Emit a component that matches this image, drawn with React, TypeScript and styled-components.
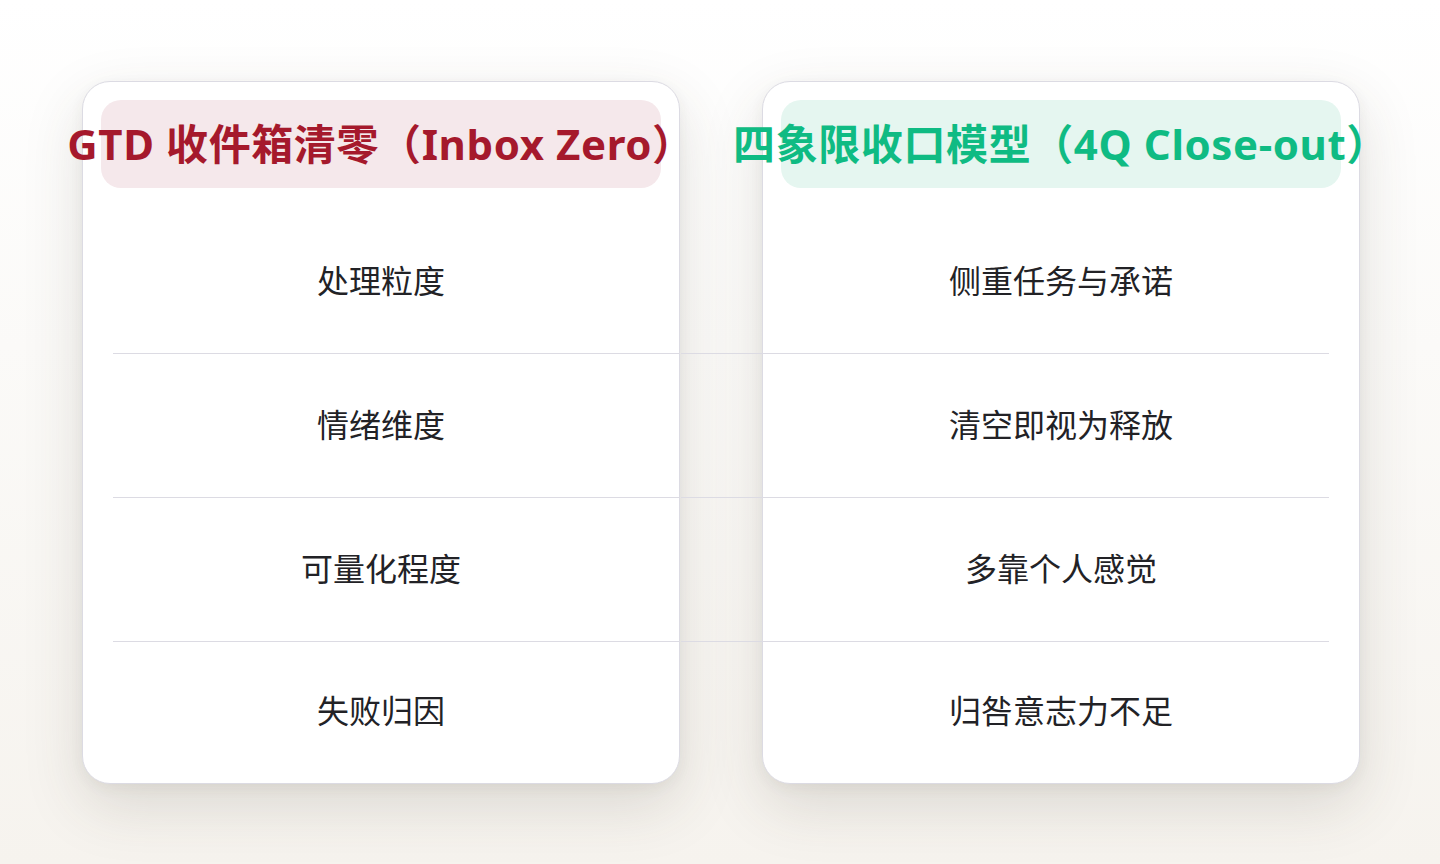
import React from "react";
import styled, { createGlobalStyle, css } from "styled-components";

const GlobalStyle = createGlobalStyle`
  html, body {
    margin: 0;
    padding: 0;
  }
  body {
    width: 1440px;
    height: 864px;
    overflow: hidden;
    background: linear-gradient(180deg, #ffffff 0%, #fbfaf8 40%, #f6f3ee 100%);
    font-family: "Noto Sans CJK SC", "Noto Sans", sans-serif;
  }
`;

const Page = styled.main`
  display: grid;
  grid-template-columns: 598px 598px;
  column-gap: 82px;
  padding: 81px 0 0 82px;
`;

type Side = "left" | "right";

const Card = styled.section`
  box-sizing: border-box;
  height: 703px;
  display: flex;
  flex-direction: column;
  background: #ffffff;
  border: 1px solid #dcdbe3;
  border-radius: 28px;
  padding: 18px 18px 0;
  box-shadow: 0 22px 60px rgba(70, 60, 45, 0.15), 0 4px 14px rgba(70, 60, 45, 0.06);
`;

const Pill = styled.div<{ $tone: "red" | "green" }>`
  flex: 0 0 88px;
  box-sizing: border-box;
  display: flex;
  align-items: center;
  justify-content: center;
  padding-bottom: 5px;
  border-radius: 20px;
  white-space: nowrap;
  font-family: "Noto Sans", "Noto Sans CJK SC", sans-serif;
  font-size: 42px;
  font-weight: 700;
  letter-spacing: 0.6px;
  ${(p) =>
    p.$tone === "red"
      ? css`
          background: #f5e8eb;
          color: #a5192c;
        `
      : css`
          background: #e5f6f0;
          color: #0fbb83;
        `}
`;

const Rows = styled.div`
  flex: 1;
  display: flex;
  flex-direction: column;
  margin: 22px 12px 0;
`;

const Row = styled.div<{ $side: Side }>`
  position: relative;
  box-sizing: border-box;
  flex: 0 0 144px;
  display: flex;
  align-items: center;
  justify-content: center;
  padding-bottom: 5px;
  font-size: 32px;
  font-weight: 400;
  color: #222226;
  border-bottom: 1px solid #dcdbe3;

  &::after {
    content: "";
    position: absolute;
    bottom: -1px;
    height: 1px;
    background: #dcdbe3;
    ${(p) =>
      p.$side === "left"
        ? css`
            right: -31px;
            width: 31px;
          `
        : css`
            left: -112px;
            width: 112px;
          `}
  }

  &:last-child {
    flex: 1;
    border-bottom: none;
    padding-bottom: 7px;
  }
  &:last-child::after {
    display: none;
  }
`;

const data = {
  left: {
    title: "GTD 收件箱清零（Inbox Zero）",
    tone: "red" as const,
    rows: ["处理粒度", "情绪维度", "可量化程度", "失败归因"],
  },
  right: {
    title: "四象限收口模型（4Q Close-out）",
    tone: "green" as const,
    rows: ["侧重任务与承诺", "清空即视为释放", "多靠个人感觉", "归咎意志力不足"],
  },
};

export default function App() {
  return (
    <>
      <GlobalStyle />
      <Page>
        {(["left", "right"] as Side[]).map((side) => (
          <Card key={side}>
            <Pill $tone={data[side].tone}>{data[side].title}</Pill>
            <Rows>
              {data[side].rows.map((r) => (
                <Row key={r} $side={side}>
                  {r}
                </Row>
              ))}
            </Rows>
          </Card>
        ))}
      </Page>
    </>
  );
}
